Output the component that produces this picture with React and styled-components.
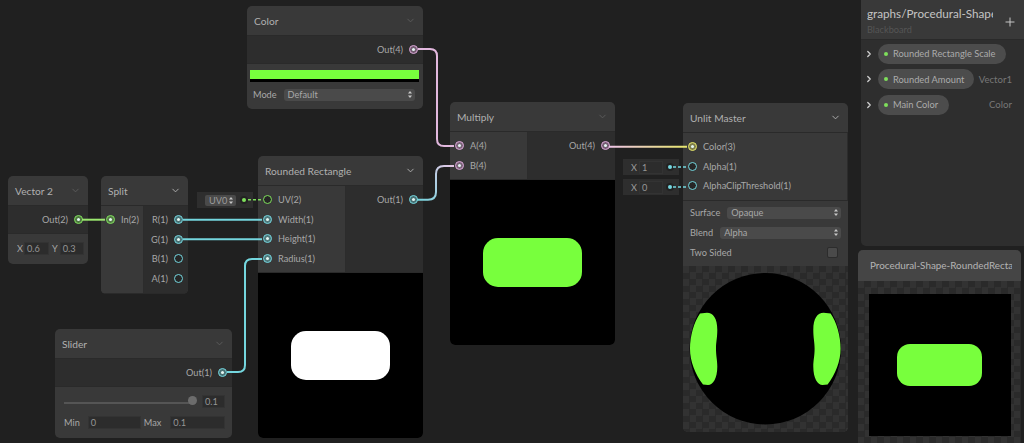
import React from 'react';
import styled, { createGlobalStyle } from 'styled-components';
import { ChevronDown, ChevronRight, Plus } from 'lucide-react';

const GREEN = '#7fe05c';
const CYAN = '#74d6de';
const PINK = '#dba6d8';
const YELLOW = '#e6e66a';
const SHAPE = '#78ff3d';

const GlobalStyle = createGlobalStyle`
  html, body { margin: 0; padding: 0; background: #202020; }
  body { font-family: Lato, "Noto Sans", "Liberation Sans", sans-serif; }
`;

const Canvas = styled.div`
  position: relative;
  width: 1024px;
  height: 443px;
  overflow: hidden;
  background: #202020;
  color: #a8a8a8;
  font-size: 9.2px;
`;

const Node = styled.div`
  position: absolute;
  left: ${(p) => p.$x}px;
  top: ${(p) => p.$y}px;
  width: ${(p) => p.$w}px;
  display: flex;
  flex-direction: column;
  background: #393939;
  border-radius: 5px;
  overflow: hidden;
`;

const Header = styled.div`
  flex: none;
  height: 29px;
  padding: 0 7px;
  display: flex;
  align-items: center;
  justify-content: space-between;
  font-size: 10.2px;
  color: #b0b0b0;
  border-bottom: 1px solid #2a2a2a;
  svg { color: ${(p) => (p.$dim ? '#5c5c5c' : '#b4b4b4')}; }
`;

const Ports = styled.div`
  display: flex;
  height: ${(p) => p.$h}px;
  border-bottom: 1px solid #2a2a2a;
`;

const InColumn = styled.div`
  width: ${(p) => p.$w}px;
  background: #393939;
  padding-top: 3.7px;
  border-right: 1px solid #2c2c2c;
  box-sizing: border-box;
`;

const OutColumn = styled.div`
  flex: 1;
  background: #2d2d2d;
  padding-top: 3.7px;
`;

const PortRow = styled.div`
  height: 19.7px;
  display: flex;
  align-items: center;
  gap: 6px;
  padding: 0 5px;
  justify-content: ${(p) => (p.$out ? 'flex-end' : 'flex-start')};
`;

const Port = styled.span`
  flex: none;
  width: 9px;
  height: 9px;
  box-sizing: border-box;
  border-radius: 50%;
  border: 1.5px solid ${(p) => p.$color};
  background: ${(p) => (p.$on ? `${p.$color}66` : '#262626')};
  display: flex;
  align-items: center;
  justify-content: center;
  &::after {
    content: '';
    display: ${(p) => (p.$on ? 'block' : 'none')};
    width: 3px;
    height: 3px;
    border-radius: 50%;
    background: #e4f6f2;
  }
`;

const Controls = styled.div`
  display: flex;
  flex-direction: column;
  gap: ${(p) => p.$gap || 0}px;
  padding: ${(p) => p.$pad || '0 7px'};
`;

const ControlRow = styled.div`
  display: flex;
  align-items: center;
  gap: ${(p) => p.$gap || 4}px;
  height: 13px;
`;

const Label = styled.span`
  flex: none;
  margin-right: ${(p) => p.$mr || 0}px;
`;

const Field = styled.span`
  box-sizing: border-box;
  display: block;
  flex: ${(p) => (p.$w ? 'none' : 1)};
  width: ${(p) => p.$w}px;
  height: 13px;
  line-height: 11px;
  padding-left: 2px;
  background: #2c2c2c;
  border: 1px solid #333;
  font-size: 9.2px;
  color: #969696;
`;

const Select = styled.div`
  box-sizing: border-box;
  flex: 1;
  height: 12px;
  padding: 0 3px 0 4px;
  display: flex;
  align-items: center;
  justify-content: space-between;
  background: #4a4a4a;
  border-radius: 3px;
  font-size: 9.2px;
  color: #a8a8a8;
`;

const Swatch = styled.div`
  height: 9px;
  margin: 6px 4px 0 3px;
  background: ${SHAPE};
  border-bottom: 3px solid #000;
`;

const Preview = styled.div`
  flex: none;
  width: ${(p) => (p.$w ? `${p.$w}px` : 'auto')};
  height: ${(p) => p.$h}px;
  background: #000;
  display: flex;
  align-items: center;
  justify-content: center;
`;

const Shape = styled.div`
  width: ${(p) => p.$w}px;
  height: ${(p) => p.$h}px;
  border-radius: ${(p) => p.$r}px;
  background: ${(p) => p.$color};
`;

const Checker = styled.div`
  display: flex;
  align-items: flex-start;
  justify-content: center;
  box-sizing: border-box;
  padding-top: ${(p) => p.$top || 0}px;
  height: ${(p) => p.$h}px;
  background: repeating-conic-gradient(#2a2a2a 0 25%, #323232 0 50%) 0 0 / 13px 13px;
`;

const InlineInput = styled.div`
  position: absolute;
  left: ${(p) => p.$x}px;
  top: ${(p) => p.$y}px;
  box-sizing: border-box;
  width: 56px;
  height: 16px;
  padding: 0 7px 0 8px;
  display: flex;
  align-items: center;
  gap: 1px;
  background: #2e2e2e;
  color: #9c9c9c;
`;

const Chip = styled.span`
  flex: none;
  width: 31px;
  height: 11px;
  box-sizing: border-box;
  padding: 0 3px 0 4px;
  display: flex;
  align-items: center;
  justify-content: space-between;
  background: #4a4a4a;
  border-radius: 2px;
  font-size: 9.2px;
`;

const InlineDot = styled.span`
  width: 4px;
  height: 4px;
  border-radius: 50%;
  margin-left: auto;
  background: ${(p) => p.$color};
  box-shadow: 0 0 0 2px #222;
`;

const Track = styled.div`
  position: relative;
  flex: 1;
  height: 2px;
  margin-top: 3px;
  background: #555;
`;

const Thumb = styled.span`
  position: absolute;
  right: -7px;
  top: -6px;
  width: 9px;
  height: 9px;
  border-radius: 50%;
  background: #6c6c6c;
`;

const Checkbox = styled.span`
  width: 11px;
  height: 11px;
  box-sizing: border-box;
  margin: 0 3px 0 auto;
  border-radius: 2px;
  background: #4a4a4a;
  border: 1px solid #2c2c2c;
`;

const Blackboard = styled.div`
  position: absolute;
  left: 861px;
  top: 0;
  width: 163px;
  height: 246px;
  background: #2e2e2e;
  border-radius: 0 0 0 5px;
`;

const BoardHead = styled.div`
  position: relative;
  height: 40px;
  padding: 5px 0 0 6px;
  box-sizing: border-box;
  background: #393939;
  border-bottom: 1px solid #2a2a2a;
`;

const BoardTitle = styled.div`
  width: 126px;
  overflow: hidden;
  white-space: nowrap;
  font-size: 11.7px;
  line-height: 16px;
  color: #c4c4c4;
`;

const BoardSub = styled.div`
  margin-top: 2px;
  font-size: 9.2px;
  line-height: 13px;
  color: #555;
`;

const AddButton = styled.span`
  position: absolute;
  right: 7px;
  top: 15px;
  display: flex;
  color: #c8c8c8;
`;

const BoardList = styled.div`
  display: flex;
  flex-direction: column;
  gap: 5.7px;
  padding: 3.5px 12px 0 3px;
`;

const BoardRow = styled.div`
  height: 20px;
  display: flex;
  align-items: center;
  color: #d0d0d0;
`;

const Pill = styled.span`
  box-sizing: border-box;
  width: ${(p) => p.$w}px;
  height: 20px;
  margin-left: 4px;
  padding-left: 6px;
  display: flex;
  align-items: center;
  gap: 5px;
  border-radius: 10px;
  background: #4c4c4c;
  font-size: 9.3px;
  white-space: nowrap;
  color: #ababab;
`;

const PillDot = styled.span`
  width: 4px;
  height: 4px;
  border-radius: 50%;
  background: ${GREEN};
`;

const TypeLabel = styled.span`
  margin-left: auto;
  font-size: 9.6px;
  color: #777;
`;

const PreviewWindow = styled.div`
  position: absolute;
  left: 858px;
  top: 250px;
  width: 163px;
  height: 193px;
  border-radius: 5px 5px 0 0;
  overflow: hidden;
  background: #2e2e2e;
`;

const PreviewHead = styled.div`
  box-sizing: border-box;
  height: 31px;
  padding: 0 0 0 12px;
  line-height: 31px;
  background: #454545;
  font-size: 9.9px;
  color: #b4b4b4;
  white-space: nowrap;
  span { display: block; width: 142px; overflow: hidden; }
`;

const Wires = styled.svg`
  position: absolute;
  left: 0;
  top: 0;
  pointer-events: none;
`;

function NodeHeader({ title, dim }) {
  return (
    <Header $dim={dim}>
      {title}
      <ChevronDown size={11} strokeWidth={2} />
    </Header>
  );
}

function In({ label, color, on }) {
  return (
    <PortRow>
      <Port $color={color} $on={on} />
      {label}
    </PortRow>
  );
}

function Out({ label, color, on }) {
  return (
    <PortRow $out>
      {label}
      <Port $color={color} $on={on} />
    </PortRow>
  );
}

function UpDown() {
  return (
    <svg width="4" height="7" viewBox="0 0 4 7" fill="#c8c8c8">
      <path d="M2 0L4 2.6H0Z" />
      <path d="M2 7L0 4.4H4Z" />
    </svg>
  );
}

function Dropdown({ children }) {
  return (
    <Select>
      {children}
      <UpDown />
    </Select>
  );
}

function WireLayer() {
  return (
    <Wires width="1024" height="443" fill="none" strokeWidth="2">
      <defs>
        <linearGradient id="cyanPink" gradientUnits="userSpaceOnUse" x1="417" y1="200" x2="454" y2="166">
          <stop offset="0" stopColor={CYAN} />
          <stop offset="1" stopColor="#e6c6e6" />
        </linearGradient>
        <linearGradient id="pinkYellow" gradientUnits="userSpaceOnUse" x1="608" y1="0" x2="688" y2="0">
          <stop offset="0" stopColor="#efc4ea" />
          <stop offset="1" stopColor={YELLOW} />
        </linearGradient>
      </defs>
      <path d="M82 219.7H105" stroke="#9be86f" />
      <path d="M183 219.7H262" stroke={CYAN} />
      <path d="M183 239.2H262" stroke={CYAN} />
      <path d="M227 372H238Q245 372 245 365V266Q245 259 252 259H262" stroke={CYAN} />
      <path d="M417 199.7H428Q436 199.7 436 192V174Q436 166 444 166H454" stroke="url(#cyanPink)" />
      <path d="M418 49H430Q437 49 437 56V139Q437 146 444 146H454" stroke="#e2b8de" />
      <path d="M609 146.7H687" stroke="url(#pinkYellow)" />
      <path d="M248 199.7H262" stroke={GREEN} strokeDasharray="3 2" strokeWidth="1.5" />
      <path d="M673 167H687" stroke={CYAN} strokeDasharray="3 2" strokeWidth="1.5" />
      <path d="M673 187H687" stroke={CYAN} strokeDasharray="3 2" strokeWidth="1.5" />
    </Wires>
  );
}

function MasterBall() {
  const blob = 'M24 46.7C30 46.7 34.3 52 34.3 64C34.3 72 33 76 33 82.7C33 90 34.3 94 34.3 100.7C34.3 112 30 119 25 119L20 118.5C12 108 7 95 7 82.7C7 70 11 56 17 47.5Z';
  return (
    <svg width="165" height="166" viewBox="0 0 165 166">
      <circle cx="82.3" cy="82.7" r="75.7" fill="#000" />
      <path d={blob} fill={SHAPE} />
      <path d={blob} fill={SHAPE} transform="translate(164.6 0) scale(-1 1)" />
    </svg>
  );
}

export default function App() {
  return (
    <Canvas>
      <GlobalStyle />

      <Node $x={247} $y={6} $w={176}>
        <NodeHeader title="Color" dim />
        <Ports $h={27}>
          <OutColumn>
            <Out label="Out(4)" color={PINK} on />
          </OutColumn>
        </Ports>
        <Swatch />
        <Controls $pad="6px 8px 8px 6px">
          <ControlRow $gap={7}>
            Mode
            <Dropdown>Default</Dropdown>
          </ControlRow>
        </Controls>
      </Node>

      <Node $x={8} $y={176} $w={80}>
        <NodeHeader title="Vector 2" dim />
        <Ports $h={27}>
          <OutColumn>
            <Out label="Out(2)" color={GREEN} on />
          </OutColumn>
        </Ports>
        <Controls $pad="8px 6px 9px 9px">
          <ControlRow $gap={1}>
            <Label>X</Label>
            <Field $w={25}>0.6</Field>
            <Label $mr={1}>&nbsp;Y</Label>
            <Field $w={24}>0.3</Field>
          </ControlRow>
        </Controls>
      </Node>

      <Node $x={101} $y={176} $w={87}>
        <NodeHeader title="Split" />
        <Ports $h={87}>
          <InColumn $w={43}>
            <In label="In(2)" color={GREEN} on />
          </InColumn>
          <OutColumn>
            <Out label="R(1)" color={CYAN} on />
            <Out label="G(1)" color={CYAN} on />
            <Out label="B(1)" color={CYAN} />
            <Out label="A(1)" color={CYAN} />
          </OutColumn>
        </Ports>
      </Node>

      <InlineInput $x={197} $y={192}>
        <Chip>
          UV0
          <UpDown />
        </Chip>
        <InlineDot $color={GREEN} />
      </InlineInput>

      <Node $x={258} $y={156} $w={165}>
        <NodeHeader title="Rounded Rectangle" />
        <Ports $h={86}>
          <InColumn $w={88}>
            <In label="UV(2)" color={GREEN} />
            <In label="Width(1)" color={CYAN} on />
            <In label="Height(1)" color={CYAN} on />
            <In label="Radius(1)" color={CYAN} on />
          </InColumn>
          <OutColumn>
            <Out label="Out(1)" color={CYAN} on />
          </OutColumn>
        </Ports>
        <Preview $h={165}>
          <Shape $w={99} $h={49} $r={15} $color="#fff" />
        </Preview>
      </Node>

      <Node $x={55} $y={329} $w={177}>
        <NodeHeader title="Slider" dim />
        <Ports $h={27}>
          <OutColumn>
            <Out label="Out(1)" color={CYAN} on />
          </OutColumn>
        </Ports>
        <Controls $pad="8px 7px 9px 9px" $gap={8}>
          <ControlRow $gap={12}>
            <Track>
              <Thumb />
            </Track>
            <Field $w={23}>0.1</Field>
          </ControlRow>
          <ControlRow $gap={3}>
            <Label $mr={5}>Min</Label>
            <Field $w={53}>0</Field>
            <Label $mr={6}>Max</Label>
            <Field>0.1</Field>
          </ControlRow>
        </Controls>
      </Node>

      <Node $x={450} $y={102} $w={165}>
        <NodeHeader title="Multiply" dim />
        <Ports $h={47}>
          <InColumn $w={78}>
            <In label="A(4)" color={PINK} on />
            <In label="B(4)" color={PINK} on />
          </InColumn>
          <OutColumn>
            <Out label="Out(4)" color={PINK} on />
          </OutColumn>
        </Ports>
        <Preview $h={165}>
          <Shape $w={99} $h={49} $r={15} $color={SHAPE} />
        </Preview>
      </Node>

      <InlineInput $x={623} $y={159}>
        <Label $mr={1}>X</Label>
        <Field $w={24}>1</Field>
        <InlineDot $color={CYAN} />
      </InlineInput>
      <InlineInput $x={623} $y={179}>
        <Label $mr={1}>X</Label>
        <Field $w={24}>0</Field>
        <InlineDot $color={CYAN} />
      </InlineInput>

      <Node $x={683} $y={103} $w={165}>
        <NodeHeader title="Unlit Master" />
        <Ports $h={67}>
          <InColumn $w={165}>
            <In label="Color(3)" color={YELLOW} on />
            <In label="Alpha(1)" color={CYAN} />
            <In label="AlphaClipThreshold(1)" color={CYAN} />
          </InColumn>
        </Ports>
        <Controls $pad="5px 7px 7px" $gap={7}>
          <ControlRow $gap={7}>
            Surface
            <Dropdown>Opaque</Dropdown>
          </ControlRow>
          <ControlRow $gap={7}>
            Blend
            <Dropdown>Alpha</Dropdown>
          </ControlRow>
          <ControlRow>
            Two Sided
            <Checkbox />
          </ControlRow>
        </Controls>
        <Checker $h={166}>
          <MasterBall />
        </Checker>
      </Node>

      <Blackboard>
        <BoardHead>
          <BoardTitle>graphs/Procedural-Shape-RoundedRectangle</BoardTitle>
          <BoardSub>Blackboard</BoardSub>
          <AddButton>
            <Plus size={14} strokeWidth={1.7} />
          </AddButton>
        </BoardHead>
        <BoardList>
          <BoardRow>
            <ChevronRight size={10} strokeWidth={3} />
            <Pill $w={128}>
              <PillDot />
              Rounded Rectangle Scale
            </Pill>
          </BoardRow>
          <BoardRow>
            <ChevronRight size={10} strokeWidth={3} />
            <Pill $w={96}>
              <PillDot />
              Rounded Amount
            </Pill>
            <TypeLabel>Vector1</TypeLabel>
          </BoardRow>
          <BoardRow>
            <ChevronRight size={10} strokeWidth={3} />
            <Pill $w={71}>
              <PillDot />
              Main Color
            </Pill>
            <TypeLabel>Color</TypeLabel>
          </BoardRow>
        </BoardList>
      </Blackboard>

      <PreviewWindow>
        <PreviewHead>
          <span>Procedural-Shape-RoundedRectangle</span>
        </PreviewHead>
        <Checker $h={162} $top={13}>
          <Preview $w={142} $h={142}>
            <Shape $w={85} $h={42} $r={13} $color={SHAPE} />
          </Preview>
        </Checker>
      </PreviewWindow>

      <WireLayer />
    </Canvas>
  );
}
